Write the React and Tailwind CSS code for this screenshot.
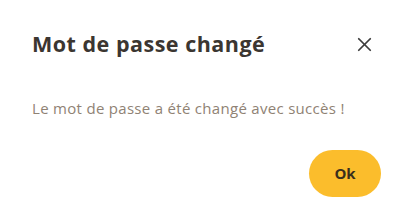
import { X } from 'lucide-react';

const App = () => {
  return (
    <div className="w-[415px] h-[218px] bg-white font-['Open_Sans',sans-serif] pl-8 pr-[34px] pt-[28px]">
      <div className="flex items-center justify-between">
        <h2 className="text-[21.5px] leading-[32px] font-bold tracking-[0.5px] text-[#3b3631]">Mot de passe changé</h2>
        <button className="w-[24px] h-[24px] flex items-center justify-center mr-[5px] text-[#3d3d3d]">
          <X className="w-[23px] h-[23px]" strokeWidth={1.8} />
        </button>
      </div>
      <p className="mt-[38px] text-[15px] leading-[20px] tracking-[0.3px] text-[#8f8274]">
        Le mot de passe a été changé avec succès !
      </p>
      <div className="flex justify-end mt-[32px]">
        <button className="w-[72px] h-[47px] rounded-full bg-[#fbbd2c] text-[15px] font-bold text-[#3a2f1c]">
          Ok
        </button>
      </div>
    </div>
  );
};

export default App;
